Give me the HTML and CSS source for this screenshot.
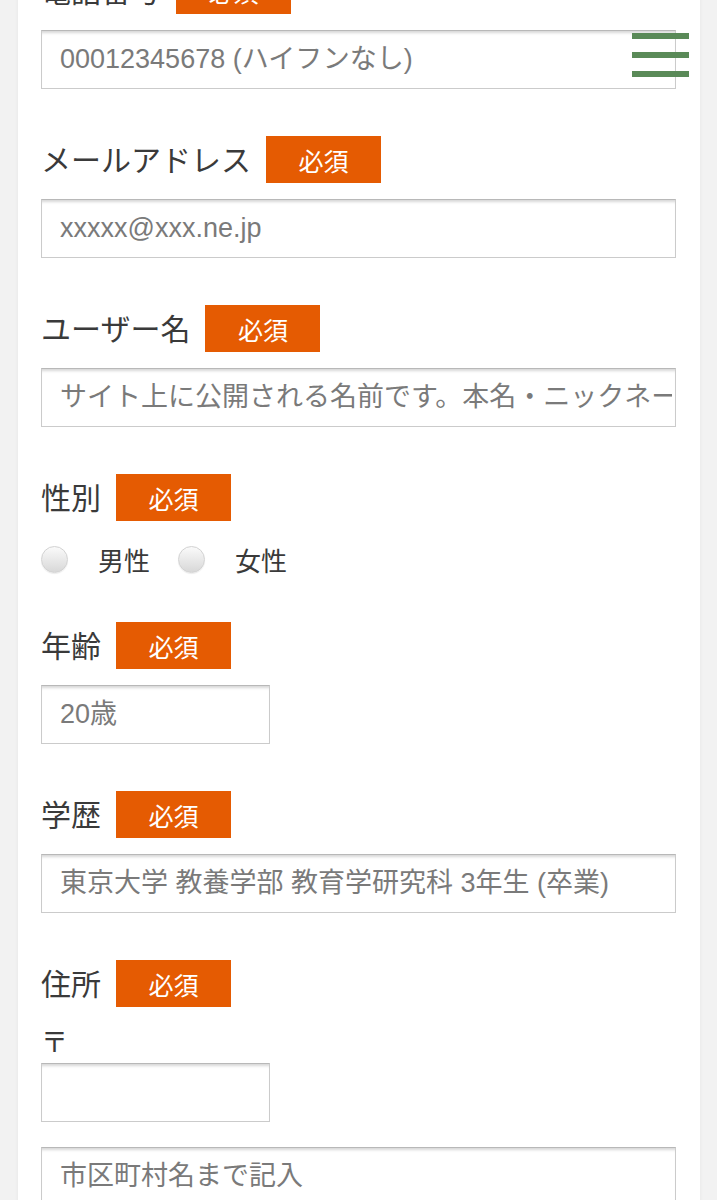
FILE: index.html
```html
<!DOCTYPE html>
<html lang="ja">
<head>
  <meta charset="UTF-8" />
  <meta name="viewport" content="width=device-width, initial-scale=1.0"/>
  <title>会員登録</title>
  <link rel="stylesheet" href="styles.css">
</head>
<body>

  <button class="menu-btn" type="button" aria-label="メニュー">
    <span></span><span></span><span></span>
  </button>

  <main class="card">
    <form class="entry-form">

      <div class="field">
        <div class="field-head">
          <span class="field-label">電話番号</span>
          <span class="req">必須</span>
        </div>
        <input class="text-input" type="tel" placeholder="00012345678 (ハイフンなし)">
      </div>

      <div class="field">
        <div class="field-head">
          <span class="field-label">メールアドレス</span>
          <span class="req">必須</span>
        </div>
        <input class="text-input" type="email" placeholder="xxxxx@xxx.ne.jp">
      </div>

      <div class="field">
        <div class="field-head">
          <span class="field-label">ユーザー名</span>
          <span class="req">必須</span>
        </div>
        <input class="text-input" type="text" placeholder="サイト上に公開される名前です。本名・ニックネーム可">
      </div>

      <div class="field">
        <div class="field-head">
          <span class="field-label">性別</span>
          <span class="req">必須</span>
        </div>
        <div class="radio-row">
          <label class="radio-item"><input type="radio" name="sex"><span>男性</span></label>
          <label class="radio-item"><input type="radio" name="sex"><span>女性</span></label>
        </div>
      </div>

      <div class="field">
        <div class="field-head">
          <span class="field-label">年齢</span>
          <span class="req">必須</span>
        </div>
        <input class="text-input short" type="text" placeholder="20歳">
      </div>

      <div class="field">
        <div class="field-head">
          <span class="field-label">学歴</span>
          <span class="req">必須</span>
        </div>
        <input class="text-input" type="text" placeholder="東京大学 教養学部 教育学研究科 3年生 (卒業)">
      </div>

      <div class="field">
        <div class="field-head">
          <span class="field-label">住所</span>
          <span class="req">必須</span>
        </div>
        <div class="zip-mark">〒</div>
        <input class="text-input short" type="text">
        <input class="text-input spaced" type="text" placeholder="市区町村名まで記入">
      </div>

    </form>
  </main>

</body>
</html>
```

FILE: styles.css
```css
body {
  margin: 0;
  background: #f2f2f2;
  font-family: "Liberation Sans", "Noto Sans CJK JP", sans-serif;
  color: #333;
  overflow: hidden;
}

.card {
  background: #fff;
  margin: -33px 17px 0 18px;
  padding: 0 24px 40px 23px;
  min-height: 1300px;
  box-shadow: 0 0 4px rgba(0,0,0,0.05);
}

.field {
  margin-bottom: 47px;
}

.field-head {
  display: flex;
  align-items: center;
  gap: 15px;
  height: 47px;
}

.field-label {
  font-size: 30px;
  color: #3a3a3a;
  padding-bottom: 4px;
}

.req {
  display: flex;
  align-items: center;
  justify-content: center;
  width: 115px;
  height: 47px;
  background: #e55b02;
  color: #fff;
  font-size: 25px;
}

.text-input {
  display: block;
  box-sizing: border-box;
  width: 100%;
  height: 59px;
  margin-top: 16px;
  padding: 0 3px 0 18px;
  border: 1px solid #cbcbcb;
  border-top-color: #b8b8b8;
  border-radius: 0;
  box-shadow: inset 0 4px 3px -2px rgba(0,0,0,0.16);
  background: #fff;
  font-family: "Liberation Sans", "Noto Sans CJK JP", sans-serif;
  font-size: 27px;
  color: #333;
  outline: none;
}

.text-input::placeholder {
  color: #7a7a7a;
}

.text-input.short {
  width: 229px;
}

.text-input.spaced {
  margin-top: 25px;
}

.zip-mark {
  margin-top: 16px;
  height: 40px;
  line-height: 40px;
  font-size: 27px;
  color: #3a3a3a;
}

.zip-mark + .text-input {
  margin-top: 0;
}

.radio-row {
  display: flex;
  align-items: center;
  height: 32px;
  margin-top: 22px;
}

.radio-item {
  display: flex;
  align-items: center;
  margin-right: 28px;
  font-size: 26px;
  color: #3a3a3a;
}

.radio-item input {
  appearance: none;
  -webkit-appearance: none;
  width: 27px;
  height: 27px;
  margin: 0 30px 0 0;
  border: 1px solid #d2d2d2;
  border-radius: 50%;
  background: linear-gradient(to bottom, #fafafa, #d8d8d8);
  box-shadow: 0 1px 1px rgba(0,0,0,0.08);
}

.menu-btn {
  position: fixed;
  top: 33px;
  right: 28px;
  display: flex;
  flex-direction: column;
  gap: 13px;
  width: 57px;
  padding: 0;
  border: none;
  background: none;
  cursor: pointer;
}

.menu-btn span {
  display: block;
  height: 6px;
  background: #5a8a58;
}
```
